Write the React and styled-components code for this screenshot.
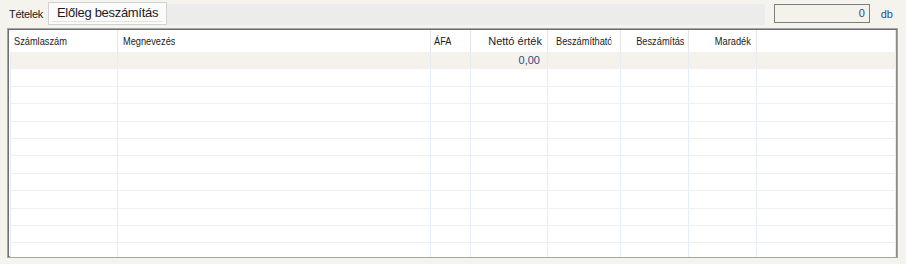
import React from "react";
import styled, { createGlobalStyle } from "styled-components";

const columns = [
  { key: "szamla", title: "Számlaszám", width: "107px", align: "left", pad: 3, narrow: true },
  { key: "megn", title: "Megnevezés", width: "313px", align: "left", pad: 5, narrow: true },
  { key: "afa", title: "ÁFA", width: "40px", align: "left", pad: 3, narrow: true },
  { key: "netto", title: "Nettó érték", width: "77px", align: "right", pad: 5 },
  { key: "beszh", title: "Beszámítható", width: "73px", align: "left", pad: 8, narrow: true, clip: 66 },
  { key: "besz", title: "Beszámítás", width: "68px", align: "right", pad: 6, narrow: true },
  { key: "mar", title: "Maradék", width: "68px", align: "right", pad: 5, narrow: true },
  { key: "fill", title: "", width: "1fr", align: "left", pad: 0 },
];

const template = columns.map((c) => c.width).join(" ");

const rows = [
  { netto: "0,00" },
  {}, {}, {}, {}, {}, {}, {}, {}, {}, {}, {}, {},
];

export default function App() {
  return (
    <>
      <GlobalStyle />
      <Page>
        <TopBar>
          <TabCaption>Tételek</TabCaption>
          <ActiveTab>
            <TabText>Előleg beszámítás</TabText>
          </ActiveTab>
          <Strip />
          <Counter>0</Counter>
          <Unit>db</Unit>
        </TopBar>
        <Panel>
          <HeaderRow>
            {columns.map((c) => (
              <HeadCell key={c.key} $align={c.align} $pad={c.pad}>
                <HeadText $align={c.align} $narrow={c.narrow} $clip={c.clip}>
                  {c.title}
                </HeadText>
              </HeadCell>
            ))}
          </HeaderRow>
          {rows.map((r, i) => (
            <DataRow key={i} $current={i === 0}>
              {columns.map((c) => (
                <DataCell key={c.key} $align={c.align}>
                  {r[c.key] || ""}
                </DataCell>
              ))}
            </DataRow>
          ))}
        </Panel>
      </Page>
    </>
  );
}

const GlobalStyle = createGlobalStyle`
  body {
    margin: 0;
    background: #f5f3ee;
    font-family: "Liberation Sans", Arial, sans-serif;
  }
`;

const Page = styled.div`
  width: 906px;
  height: 264px;
  overflow: hidden;
`;

const TopBar = styled.div`
  display: flex;
  align-items: center;
  height: 28px;
  padding-right: 13px;
`;

const TabCaption = styled.div`
  flex: none;
  width: 48px;
  padding-left: 9px;
  box-sizing: border-box;
  font-size: 11px;
  letter-spacing: -0.3px;
  color: #1b1b1b;
  margin-top: -1px;
`;

const ActiveTab = styled.div`
  flex: none;
  box-sizing: border-box;
  width: 119px;
  height: 23px;
  margin-top: -1px;
  padding: 0 3px;
  border: 1px solid #d2d2d2;
  background: #fbfbfb;
  display: flex;
  align-items: flex-start;
`;

const TabText = styled.span`
  display: block;
  width: 100%;
  padding: 1px 5px 0;
  height: 19px;
  box-sizing: border-box;
  border-bottom: 1px solid #e2e2e2;
  font-size: 13px;
  letter-spacing: -0.3px;
  color: #1b1b1b;
  line-height: 17px;
  white-space: nowrap;
`;

const Strip = styled.div`
  flex: 1;
  align-self: flex-start;
  margin-top: 4px;
  height: 21px;
  background: #ececec;
`;

const Counter = styled.div`
  flex: none;
  box-sizing: border-box;
  width: 96px;
  height: 19px;
  margin-left: 9px;
  margin-top: -1px;
  padding-right: 4px;
  border: 1px solid #7d7d7d;
  background: #f5f2ec;
  text-align: right;
  font-size: 11px;
  line-height: 17px;
  color: #2b4c84;
`;

const Unit = styled.div`
  flex: none;
  margin-left: 11px;
  font-size: 11px;
  color: #2b4c84;
  margin-top: -1px;
`;

const Panel = styled.div`
  box-sizing: border-box;
  margin-left: 7px;
  width: 891px;
  height: 230px;
  border: 1px solid #a5a5a5;
  box-shadow: inset 1px 1px 0 #6f6f6f, inset -1px -1px 0 #8a8a8a;
  background: #ffffff;
  padding: 1px 1px 0 2px;
  overflow: hidden;
`;

const HeaderRow = styled.div`
  display: grid;
  grid-template-columns: ${template};
  height: 22px;
  border-left: 1px solid #ffffff;
`;

const HeadCell = styled.div`
  border-right: 1px solid #e6e6e6;
  padding: 0 ${(p) => p.$pad}px;
  text-align: ${(p) => p.$align};
  font-size: 11px;
  line-height: 22px;
  color: #1b1b1b;
  white-space: nowrap;
  overflow: hidden;
`;

const HeadText = styled.span`
  display: inline-block;
  vertical-align: top;
  overflow: hidden;
  max-width: ${(p) => (p.$clip ? `${p.$clip}px` : "none")};
  transform: ${(p) => (p.$narrow ? "scaleX(0.84)" : "none")};
  transform-origin: ${(p) => (p.$align === "right" ? "right" : "left")} center;
`;

const DataRow = styled.div`
  display: grid;
  grid-template-columns: ${template};
  height: 17.4px;
  box-sizing: border-box;
  border-left: 1px solid #e4ebf4;
  border-bottom: 1px solid #efefef;
  background: ${(p) => (p.$current ? "#f5f2ec" : "#ffffff")};
`;

const DataCell = styled.div`
  border-right: 1px solid #e6edf5;
  padding: 0 7px 0 3px;
  text-align: ${(p) => p.$align};
  font-size: 11px;
  line-height: 17px;
  color: #2b4c84;
  white-space: nowrap;
  overflow: hidden;
`;
